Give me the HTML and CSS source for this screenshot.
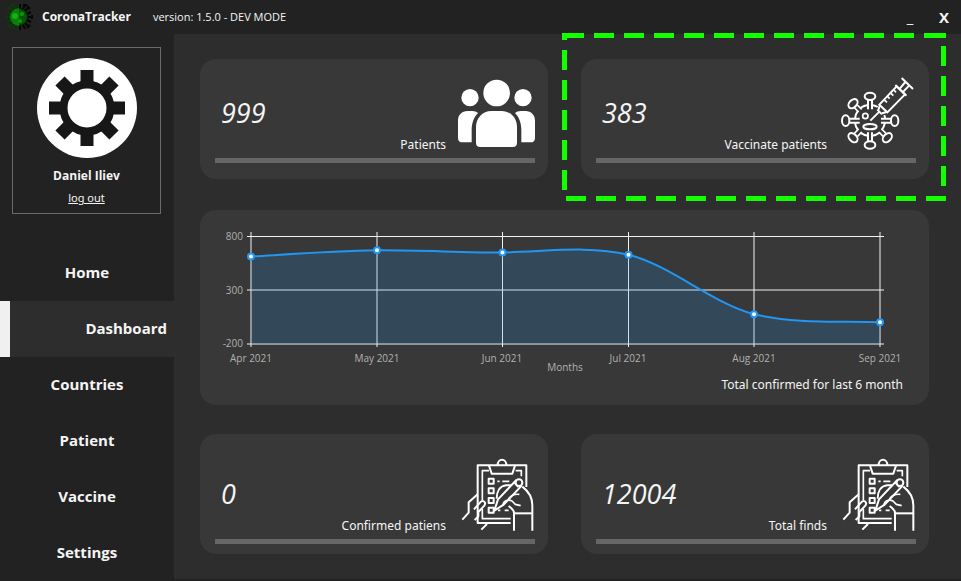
FILE: index.html
```html
<!DOCTYPE html>
<html lang="en">
<head>
<meta charset="utf-8">
<title>CoronaTracker</title>
<link rel="stylesheet" href="styles.css">
</head>
<body>
<svg class="defs" aria-hidden="true">
  <symbol id="clipboard" viewBox="25 21 231 231">
    <g fill="none" stroke="#fff" stroke-width="6" stroke-linejoin="round">
      <path d="M183 219H84V46H230V111"/>
      <path d="M118 62H98V150M98 176V206H183M198 62H215V79" stroke-width="5"/>
      <path d="M118 47L126 71H188L196 47"/>
      <path d="M144 45C144 24 170 24 170 45"/>
      <path d="M117 86h15v15h-15zM117 115h15v15h-15zM117 144h15v15h-15zM117 173h15v15h-15z"/>
      <path d="M143 94h7M158 94h21M145 181h7M165 181h12" stroke-width="5"/>
      <path d="M141 146C141 125 150 108 170 106H184"/>
      <path fill="#383838" d="M200 90L145 148L134 182L162 164L216 107"/>
      <circle cx="208" cy="98" r="10" fill="#383838"/>
      <path d="M194 99L206 112" stroke-width="4"/>
      <path d="M218 110C239 126 248 145 248 166V242M193 242V189C193 179 185 175 177 168"/>
      <path d="M193 190H248"/>
      <path d="M160 167C160 151 177 147 187 153L197 163L213 167" stroke-width="5"/>
      <path d="M176 147C184 136 191 132 209 133" stroke-width="5"/>
      <path d="M84 133L57 157V188L38 209"/>
      <path d="M73 178L91 158C99 148 111 156 104 167L86 186V199L75 210M112 222L95 239"/>
    </g>
  </symbol>
</svg>

<header class="titlebar">
  <svg class="logo" viewBox="0 0 28 28" aria-hidden="true">
    <g fill="none" stroke-width="2">
      <path stroke="#0b3a0b" d="M14 5V1M8 8L4 4M5 14H1M8 20L4 24M14 23V27M6 11L2 9M6 17L2 19M10 6L8 2M10 22L8 26M6 2H10M3 6L6 3M1 12V16M3 22L6 25"/>
      <path stroke="#060606" d="M15 5V1M20 8L24 4M23 14H27M20 20L24 24M15 23V27M22 11L26 9M22 17L26 19M18 6L20 2M18 22L20 26M18 2H22M22 3L25 6M27 12V16M22 25L25 22"/>
    </g>
    <circle cx="14" cy="14" r="9" fill="#0a180a"/>
    <path d="M14 5A9 9 0 0 0 14 23Z" fill="#0a7f0a"/>
    <path d="M14 6A8 8 0 0 1 14 22Z" fill="#075507"/>
    <circle cx="10" cy="13" r="3" fill="#0cb80c"/>
    <circle cx="17" cy="11" r="2" fill="#0a9a0a"/>
    <circle cx="15" cy="18" r="2" fill="#0a9a0a"/>
  </svg>
  <h1 class="app-name">CoronaTracker</h1>
  <span class="version">version: 1.5.0 - DEV MODE</span>
  <div class="window-buttons">
    <button type="button" aria-label="Minimize">_</button>
    <button type="button" class="close" aria-label="Close">X</button>
  </div>
</header>

<div class="shell">
  <aside class="sidebar">
    <section class="profile">
      <svg class="avatar" viewBox="-50 -50 100 100" aria-hidden="true">
        <circle r="50" fill="#fff"/>
        <g stroke="#171717" stroke-width="13">
          <path d="M0 -38V-22M0 38V22M-38 0H-22M38 0H22"/>
          <path d="M-27 -27L-16 -16M27 27L16 16M-27 27L-16 16M27 -27L16 -16"/>
        </g>
        <circle r="23.500" fill="#fff" stroke="#171717" stroke-width="8"/>
      </svg>
      <strong class="user">Daniel Iliev</strong>
      <a class="logout" href="#">log out</a>
    </section>
    <nav class="menu">
      <a href="#">Home</a>
      <a href="#" class="active" aria-current="page">Dashboard</a>
      <a href="#">Countries</a>
      <a href="#">Patient</a>
      <a href="#">Vaccine</a>
      <a href="#">Settings</a>
    </nav>
  </aside>

  <main class="content">
    <article class="card">
      <div class="card-body">
        <span class="value">999</span>
        <span class="label">Patients</span>
        <svg class="icon" viewBox="54 33 231 231" aria-hidden="true">
          <g fill="#fff">
            <circle cx="170" cy="84" r="40"/>
            <circle cx="90" cy="98" r="26"/>
            <circle cx="249" cy="98" r="26"/>
            <path d="M154 138H185C212 138 231 160 231 186V233Q231 246 218 246H121Q108 246 108 233V186C108 160 127 138 154 138Z"/>
            <path d="M82 138H97Q108 138 114 144C101 157 95 176 95 194V232H68Q54 232 54 218V166C54 150 66 138 82 138Z"/>
            <path d="M257 138H242Q231 138 225 144C238 157 244 176 244 194V232H271Q285 232 285 218V166C285 150 273 138 257 138Z"/>
          </g>
        </svg>
      </div>
      <div class="bar"></div>
    </article>

    <article class="card">
      <div class="card-body">
        <span class="value">383</span>
        <span class="label">Vaccinate patients</span>
        <svg class="icon" viewBox="42 33 231 231" aria-hidden="true">
          <g fill="none" stroke="#fff" stroke-width="6">
            <path d="M142 121C148 121 153 123 158 126M178 150C179 153 180 157 180 161M180 173C178 181 175 189 170 195M164 203C157 208 151 211 142 212M129 212C120 211 113 208 106 203M99 195C94 189 91 182 90 173M90 161C91 151 94 144 99 137M106 129C113 124 120 121 129 120"/>
            <path d="M129 105V133M141 105V133M129 228V202M141 228V202M73 161H104M73 173H104M198 161H168M198 173H168"/>
            <ellipse cx="135" cy="94" rx="16" ry="11"/>
            <ellipse cx="135" cy="240" rx="16" ry="11"/>
            <ellipse cx="62" cy="167" rx="11" ry="16"/>
            <ellipse cx="209" cy="167" rx="11" ry="16"/>
            <ellipse cx="84" cy="116" rx="16" ry="11" transform="rotate(-45 84 116)"/>
            <ellipse cx="84" cy="218" rx="16" ry="11" transform="rotate(45 84 218)"/>
            <ellipse cx="187" cy="218" rx="16" ry="11" transform="rotate(-45 187 218)"/>
            <path d="M88 128L101 141M97 120L110 133M88 205L101 192M98 214L110 201M183 205L170 192M174 214L162 201" stroke-width="5"/>
            <circle cx="121" cy="153" r="8" stroke-width="5"/>
            <ellipse cx="135" cy="185" rx="20" ry="8"/>
            <path d="M136 167L164 139M157 134L171 148M160 135L165 120M171 145L185 141"/>
            <path d="M163 119L187 142L240 88L215 64Z"/>
            <path d="M178 105L186 112M188 95L194 101M198 85L205 92M207 75L213 82" stroke-width="5"/>
            <path d="M211 60L244 92M230 39L264 72M225 70L241 51M235 80L252 62"/>
          </g>
        </svg>
      </div>
      <div class="bar"></div>
      <svg class="highlight" viewBox="0 0 384 168" aria-hidden="true">
        <g stroke="#14ff00" stroke-width="5" stroke-dasharray="20 10">
          <path d="M2 2.500H384M4 165.500H384M2.500 17V160M381.500 13V160"/>
          <path d="M0 2.500H8M2.500 0V7M376 2.500H384" stroke-dasharray="none"/>
        </g>
      </svg>
    </article>

    <article class="card chart">
      <svg class="plot" viewBox="0 0 729 165" role="img" aria-label="Total confirmed by month">
        <g stroke="#f2f2f2">
          <path d="M47 26.500H684M47 80H684M47 134H684"/>
          <path d="M51 22V137M177 22V137M302.500 22V137M428.500 22V137M554 22V137M680 22V137"/>
        </g>
        <path fill="#2196f3" fill-opacity=".18" d="M51 46.500C93 44 135 41 177 40.300C219 40 261 42.500 302.500 42.500C344 42 387 35 428.500 44.700C470 55 512 93 554 104.200C596 114 638 111 680 112.300V134H51Z"/>
        <path fill="none" stroke="#2196f3" stroke-width="2" d="M51 46.500C93 44 135 41 177 40.300C219 40 261 42.500 302.500 42.500C344 42 387 35 428.500 44.700C470 55 512 93 554 104.200C596 114 638 111 680 112.300"/>
        <g fill="#fff" stroke="#2196f3" stroke-width="2">
          <circle cx="51" cy="46.500" r="3"/><circle cx="177" cy="40.300" r="3"/><circle cx="302.500" cy="42.500" r="3"/>
          <circle cx="428.500" cy="44.700" r="3"/><circle cx="554" cy="104.200" r="3"/><circle cx="680" cy="112.300" r="3"/>
        </g>
        <g class="tick end"><text x="43" y="30">800</text><text x="43" y="84">300</text><text x="43" y="137">-200</text></g>
        <g class="tick mid">
          <text x="51" y="152">Apr 2021</text><text x="177" y="152">May 2021</text><text x="302" y="152">Jun 2021</text>
          <text x="428" y="152">Jul 2021</text><text x="554" y="152">Aug 2021</text><text x="680" y="152">Sep 2021</text>
          <text x="365" y="161">Months</text>
        </g>
      </svg>
      <p class="caption">Total confirmed for last 6 month</p>
    </article>

    <article class="card low">
      <div class="card-body">
        <span class="value">0</span>
        <span class="label">Confirmed patiens</span>
        <svg class="icon" aria-hidden="true"><use href="#clipboard"/></svg>
      </div>
      <div class="bar"></div>
    </article>

    <article class="card low">
      <div class="card-body">
        <span class="value">12004</span>
        <span class="label">Total finds</span>
        <svg class="icon" aria-hidden="true"><use href="#clipboard"/></svg>
      </div>
      <div class="bar"></div>
    </article>
  </main>
</div>
</body>
</html>
```
FILE: styles.css
```css
* { box-sizing: border-box; }

body {
  margin: 0;
  min-height: 100vh;
  display: flex;
  flex-direction: column;
  background: #222;
  color: #f5f5f5;
  font-family: "Open Sans", "Noto Sans", sans-serif;
  font-size: 12px;
  line-height: 18px;
}

a { color: inherit; }

.defs { display: none; }

.titlebar {
  display: flex;
  align-items: center;
  height: 34px;
  padding: 0 9px 0 5px;
}

.logo { width: 28px; height: 28px; }

.app-name {
  margin: 0 22px 0 9px;
  font-size: 12px;
  font-weight: 700;
}

.version { font-size: 11px; }

.window-buttons {
  display: flex;
  gap: 18px;
  margin-left: auto;
}

.window-buttons button {
  width: 16px;
  padding: 0;
  border: 0;
  background: none;
  color: inherit;
  font: inherit;
  font-size: 15px;
}

.window-buttons .close { font-weight: 700; }

.shell {
  flex: 1;
  display: flex;
}

.sidebar {
  flex: 0 0 174px;
  padding-top: 13px;
}

.profile {
  display: flex;
  flex-direction: column;
  align-items: center;
  height: 167px;
  margin: 0 13px 31px 12px;
  padding-top: 10px;
  border: 1px solid #6b6b6b;
}

.avatar { width: 100px; height: 100px; }

.user {
  margin-top: 9px;
  font-size: 12px;
}

.logout {
  margin-top: 4px;
  font-family: "Noto Sans", sans-serif;
  font-size: 11px;
}

.menu a {
  display: block;
  height: 56px;
  line-height: 54px;
  font-size: 15px;
  font-weight: 700;
  text-align: center;
  text-decoration: none;
}

.menu .active {
  padding-right: 7px;
  border-left: 10px solid #f0f0f0;
  background: #2d2d2d;
  text-align: right;
}

.content {
  flex: 1;
  display: grid;
  grid-template-columns: 1fr 1fr;
  gap: 29px 33px;
  align-content: start;
  padding: 25px 32px 25px 26px;
  border-bottom: 2px solid #222;
  background: #2d2d2d;
}

.card {
  position: relative;
  height: 120px;
  padding: 17px 13px 0 15px;
  border-radius: 16px;
  background: #383838;
}

.card.low { padding-top: 23px; }

.card-body {
  display: flex;
  gap: 12px;
}

.value {
  align-self: center;
  margin: 0 0 4px 6px;
  font-size: 27px;
  font-style: italic;
  line-height: 36px;
}

.label,
.caption {
  font-family: "Noto Sans", sans-serif;
  font-size: 12px;
  line-height: 16px;
}

.label {
  align-self: flex-end;
  margin-left: auto;
}

.icon { width: 77px; height: 77px; }

.bar {
  height: 5px;
  margin-top: 5px;
  background: #666;
}

.highlight {
  position: absolute;
  top: -26px;
  left: -19px;
  width: calc(100% + 36px);
}

.card.chart {
  grid-column: 1 / -1;
  height: auto;
  margin-top: 2px;
  padding: 0 0 12px;
}

.plot {
  display: block;
  width: 100%;
}

.tick {
  fill: #b0b0b0;
  font-size: 10px;
}

.end { text-anchor: end; }

.mid { text-anchor: middle; }

.caption {
  margin: 2px 26px 0 0;
  text-align: right;
}
```
